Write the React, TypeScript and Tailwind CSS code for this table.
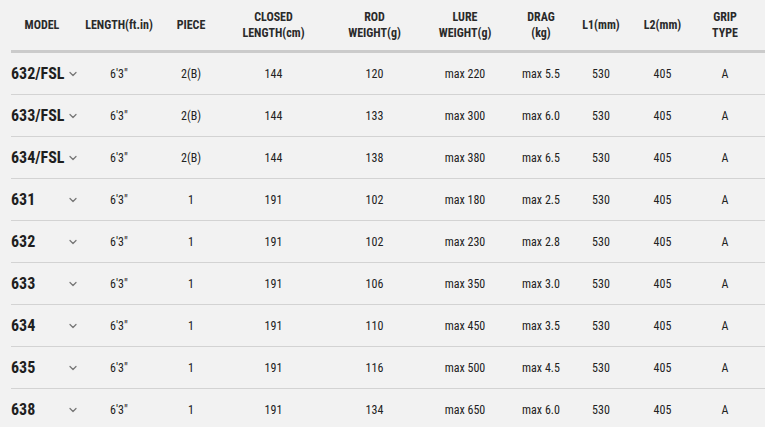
import { ChevronDown } from "lucide-react"

type Rod = {
  model: string
  length: string
  piece: string
  closed: number
  weight: number
  lure: number
  drag: string
  l1: number
  l2: number
  grip: string
}

const rods: Rod[] = [
  { model: "632/FSL", length: "6'3\"", piece: "2(B)", closed: 144, weight: 120, lure: 220, drag: "5.5", l1: 530, l2: 405, grip: "A" },
  { model: "633/FSL", length: "6'3\"", piece: "2(B)", closed: 144, weight: 133, lure: 300, drag: "6.0", l1: 530, l2: 405, grip: "A" },
  { model: "634/FSL", length: "6'3\"", piece: "2(B)", closed: 144, weight: 138, lure: 380, drag: "6.5", l1: 530, l2: 405, grip: "A" },
  { model: "631", length: "6'3\"", piece: "1", closed: 191, weight: 102, lure: 180, drag: "2.5", l1: 530, l2: 405, grip: "A" },
  { model: "632", length: "6'3\"", piece: "1", closed: 191, weight: 102, lure: 230, drag: "2.8", l1: 530, l2: 405, grip: "A" },
  { model: "633", length: "6'3\"", piece: "1", closed: 191, weight: 106, lure: 350, drag: "3.0", l1: 530, l2: 405, grip: "A" },
  { model: "634", length: "6'3\"", piece: "1", closed: 191, weight: 110, lure: 450, drag: "3.5", l1: 530, l2: 405, grip: "A" },
  { model: "635", length: "6'3\"", piece: "1", closed: 191, weight: 116, lure: 500, drag: "4.5", l1: 530, l2: 405, grip: "A" },
  { model: "638", length: "6'3\"", piece: "1", closed: 191, weight: 134, lure: 650, drag: "6.0", l1: 530, l2: 405, grip: "A" },
]

const cols = ["w-[62px]", "w-[92px]", "w-[52px]", "w-[113px]", "w-[89px]", "w-[92px]", "w-[60px]", "w-[60px]", "w-[63px]", "w-[62px]"]

const headers = [
  ["MODEL"],
  ["LENGTH(ft.in)"],
  ["PIECE"],
  ["CLOSED", "LENGTH(cm)"],
  ["ROD", "WEIGHT(g)"],
  ["LURE", "WEIGHT(g)"],
  ["DRAG", "(kg)"],
  ["L1(mm)"],
  ["L2(mm)"],
  ["GRIP", "TYPE"],
]

export default function App() {
  return (
    <div className="min-h-[427px] w-[765px] overflow-hidden bg-[#f2f2f2] pl-[11px] font-['Roboto_Condensed','Liberation_Sans_Narrow',Roboto,sans-serif] text-[#222]">
      {/* Header */}
      <div className="flex h-[53px] items-center border-b-[3px] border-[#cbcbcb] pb-[1px]">
        {headers.map((lines, i) => (
          <div key={i} className={`${cols[i]} shrink-0 text-center text-[12px] font-bold leading-[16px] text-[#2a2a2a]`}>
            {lines.map((l) => (
              <div key={l}>{l}</div>
            ))}
          </div>
        ))}
      </div>

      {/* Rows */}
      {rods.map((r) => (
        <div key={r.model} className="flex h-[42px] items-center border-b border-[#d3d3d3] text-[12px]">
          <div className={`${cols[0]} flex shrink-0 items-center`}>
            <span className="w-[56px] shrink-0 text-[16px] font-bold text-[#1f1f1f]">{r.model}</span>
            <ChevronDown className="h-[12px] w-[12px] shrink-0 text-[#777]" strokeWidth={2.5} />
          </div>
          <div className={`${cols[1]} shrink-0 text-center`}>{r.length}</div>
          <div className={`${cols[2]} shrink-0 text-center`}>{r.piece}</div>
          <div className={`${cols[3]} shrink-0 text-center`}>{r.closed}</div>
          <div className={`${cols[4]} shrink-0 text-center`}>{r.weight}</div>
          <div className={`${cols[5]} shrink-0 text-center`}>max {r.lure}</div>
          <div className={`${cols[6]} shrink-0 text-center`}>max {r.drag}</div>
          <div className={`${cols[7]} shrink-0 text-center`}>{r.l1}</div>
          <div className={`${cols[8]} shrink-0 text-center`}>{r.l2}</div>
          <div className={`${cols[9]} shrink-0 text-center`}>{r.grip}</div>
        </div>
      ))}
    </div>
  )
}
